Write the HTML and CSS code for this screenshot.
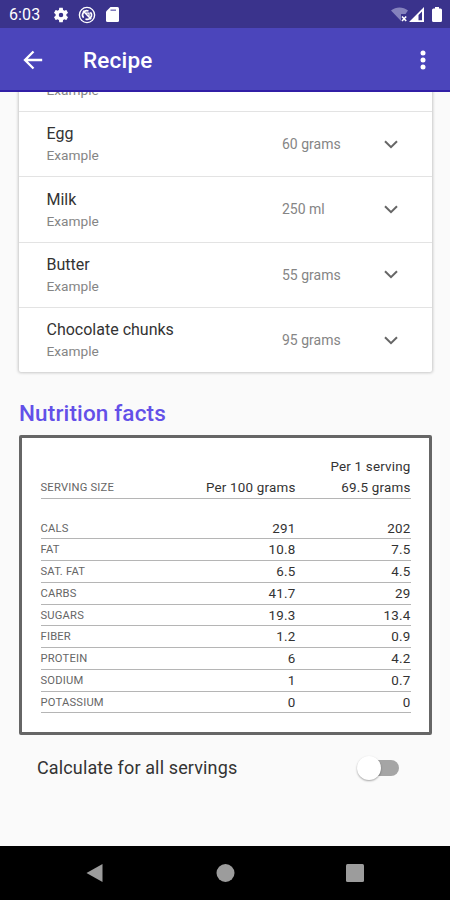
FILE: index.html
```
<!DOCTYPE html>
<html lang="en">
<head>
    <meta charset="UTF-8">
    <meta name="viewport" content="width=device-width, initial-scale=1.0">
    <title>Recipe</title>
    <link rel="stylesheet" href="styles.css">
</head>
<body>
    <div class="status-bar">
        <span class="time">6:03</span>
        <svg class="status-gear" width="18" height="18" viewBox="0 0 24 24"><path fill="#fff" d="M19.14 12.94c.04-.3.06-.61.06-.94 0-.32-.02-.64-.07-.94l2.03-1.58c.18-.14.23-.41.12-.61l-1.92-3.32c-.12-.22-.37-.29-.59-.22l-2.39.96c-.5-.38-1.03-.7-1.62-.94L14.4 2.81c-.04-.24-.24-.41-.48-.41h-3.84c-.24 0-.43.17-.47.41L9.25 5.35C8.66 5.59 8.12 5.92 7.63 6.29L5.24 5.33c-.22-.08-.47 0-.59.22L2.74 8.87c-.12.21-.08.47.12.61l2.03 1.58C4.84 11.36 4.8 11.69 4.8 12s.02.64.07.94l-2.03 1.58c-.18.14-.23.41-.12.61l1.92 3.32c.12.22.37.29.59.22l2.39-.96c.5.38 1.03.7 1.62.94l.36 2.54c.05.24.24.41.48.41h3.84c.24 0 .44-.17.47-.41l.36-2.54c.59-.24 1.13-.56 1.62-.94l2.39.96c.22.08.47 0 .59-.22l1.92-3.32c.12-.22.07-.47-.12-.61l-2.01-1.58zM12 15a3 3 0 1 1 0-6 3 3 0 0 1 0 6z"/></svg>
        <svg class="status-sync" width="18" height="18" viewBox="0 0 18 18" fill="none" stroke="#fff"><circle cx="9" cy="9" r="7.600" stroke-width="1.400"/><path stroke-width="1.600" d="M5.600 11.800A4.300 4.300 0 0 1 10.500 5M12.400 6.200A4.300 4.300 0 0 1 7.500 13M5 4.800l8.200 8.400"/><path stroke-width="1.300" d="M8 7.200h3v3.200"/></svg>
        <svg class="status-sd" width="13" height="15" viewBox="0 0 13 15"><path fill="#fff" d="M4.500 0h7A1.500 1.500 0 0 1 13 1.500v12a1.500 1.500 0 0 1-1.500 1.500h-10A1.500 1.500 0 0 1 0 13.500V4.500z"/><path stroke="#7d79bb" stroke-width="1.500" d="M4.500 3.200h5.500"/></svg>
        <span class="spacer"></span>
        <svg width="34" height="16" viewBox="0 0 34 16"><path fill="#8582bd" d="M0 3.500C5-.6 12-.6 17 3.500L14.500 7H10v7z"/><path stroke="#fff" stroke-width="1.600" d="M11 9.500l4.200 4.500M15.200 9.500L11 14"/><path fill="#fff" fill-rule="evenodd" d="M18 15L33 0v15zM27.500 8v5.200H31V4.500z"/></svg>
        <svg class="status-battery" width="10" height="15" viewBox="0 0 10 15"><path fill="#fff" d="M3 0h4v1.500h1.500A1.500 1.500 0 0 1 10 3v10.500A1.500 1.500 0 0 1 8.500 15h-7A1.500 1.500 0 0 1 0 13.500V3a1.500 1.500 0 0 1 1.500-1.500H3z"/></svg>
    </div>

    <header class="app-bar">
        <svg width="20" height="20" viewBox="0 0 20 20" fill="none" stroke="#fff" stroke-width="2.300"><path d="M19.200 10H2M10.500 1.500L2 10l8.500 8.500"/></svg>
        <h1>Recipe</h1>
        <svg width="8" height="20" viewBox="0 0 8 20" fill="#fff"><circle cx="4" cy="3" r="2.500"/><circle cx="4" cy="10" r="2.500"/><circle cx="4" cy="17" r="2.500"/></svg>
    </header>

    <main>
        <div class="card">
            <div class="row row-cut">
                <div class="item"><span class="source">Example</span></div>
            </div>
            <div class="row">
                <div class="item"><span class="name">Egg</span><span class="source">Example</span></div>
                <span class="amount">60 grams</span>
                <svg class="chevron" width="14" height="9" viewBox="0 0 14 9"><path d="M1 1.200l6 6 6-6"/></svg>
            </div>
            <div class="row">
                <div class="item"><span class="name">Milk</span><span class="source">Example</span></div>
                <span class="amount">250 ml</span>
                <svg class="chevron" width="14" height="9" viewBox="0 0 14 9"><path d="M1 1.200l6 6 6-6"/></svg>
            </div>
            <div class="row">
                <div class="item"><span class="name">Butter</span><span class="source">Example</span></div>
                <span class="amount">55 grams</span>
                <svg class="chevron" width="14" height="9" viewBox="0 0 14 9"><path d="M1 1.200l6 6 6-6"/></svg>
            </div>
            <div class="row">
                <div class="item"><span class="name">Chocolate chunks</span><span class="source">Example</span></div>
                <span class="amount">95 grams</span>
                <svg class="chevron" width="14" height="9" viewBox="0 0 14 9"><path d="M1 1.200l6 6 6-6"/></svg>
            </div>
        </div>

        <h2>Nutrition facts</h2>
        <div class="facts">
            <div class="fact fact-head"><span class="label">Serving size</span><span>Per 100 grams</span><span>Per 1 serving<br>69.5 grams</span></div>
            <div class="fact"><span class="label">Cals</span><span>291</span><span>202</span></div>
            <div class="fact"><span class="label">Fat</span><span>10.8</span><span>7.5</span></div>
            <div class="fact"><span class="label">Sat. fat</span><span>6.5</span><span>4.5</span></div>
            <div class="fact"><span class="label">Carbs</span><span>41.7</span><span>29</span></div>
            <div class="fact"><span class="label">Sugars</span><span>19.3</span><span>13.4</span></div>
            <div class="fact"><span class="label">Fiber</span><span>1.2</span><span>0.9</span></div>
            <div class="fact"><span class="label">Protein</span><span>6</span><span>4.2</span></div>
            <div class="fact"><span class="label">Sodium</span><span>1</span><span>0.7</span></div>
            <div class="fact"><span class="label">Potassium</span><span>0</span><span>0</span></div>
        </div>

        <div class="toggle-row">
            <span>Calculate for all servings</span>
            <div class="switch"><div class="thumb"></div></div>
        </div>
    </main>

    <nav class="nav-bar">
        <svg width="20" height="20" viewBox="0 0 20 20"><path d="M17.500 1v18L1.500 10z"/></svg>
        <svg width="20" height="20" viewBox="0 0 20 20"><circle cx="10.500" cy="10" r="9"/></svg>
        <svg width="20" height="20" viewBox="0 0 20 20"><rect x="1" y="1" width="18" height="18" rx="1.500"/></svg>
    </nav>
</body>
</html>
```
FILE: styles.css
```
* {
    box-sizing: border-box;
}

body {
    margin: 0;
    height: 900px;
    display: flex;
    flex-direction: column;
    font-family: Roboto, sans-serif;
    background: #fafafa;
    overflow: hidden;
}

svg {
    flex: none;
    display: block;
}

.status-bar {
    height: 28px;
    flex: none;
    display: flex;
    align-items: center;
    padding: 1px 8px 0 9px;
    background: #3a338c;
    color: white;
}

.time {
    width: 43px;
    font-size: 16px;
    letter-spacing: 0.1px;
}

.status-sync {
    margin-left: 8px;
}

.status-sd {
    margin-left: 10px;
}

.spacer {
    flex: 1;
}

.status-battery {
    margin-left: 7px;
}

.app-bar {
    height: 64px;
    flex: none;
    display: flex;
    align-items: center;
    padding: 2px 23px 0 23px;
    background: #4b45bb;
    border-bottom: 2px solid #311fa6;
    color: white;
}

h1 {
    flex: 1;
    margin: 0 0 0 40px;
    font-size: 22.5px;
    font-weight: 500;
    letter-spacing: 0.2px;
}

main {
    flex: 1;
    min-height: 0;
    overflow: hidden;
}

.card {
    margin: -45px 18px 0 19px;
    background: white;
    border-radius: 2px;
    box-shadow: 0 0 3px 1px rgba(0, 0, 0, 0.2);
}

.row {
    height: 65.2px;
    display: flex;
    align-items: center;
    padding: 0 34px 0 27.500px;
    border-bottom: 1px solid #e3e3e3;
}

.row:last-child {
    height: 64.6px;
    border-bottom: none;
}

.row-cut {
    align-items: flex-end;
    padding-bottom: 10.5px;
}

.item {
    flex: 1;
    display: flex;
    flex-direction: column;
    padding-top: 1.4px;
}

.name {
    font-size: 16px;
    line-height: 21px;
    color: #333;
}

.source {
    font-size: 13.7px;
    line-height: 22px;
    color: #858585;
}

.amount {
    width: 102px;
    font-size: 14px;
    color: #858585;
}

.chevron {
    fill: none;
    stroke: #666;
    stroke-width: 2;
}

h2 {
    margin: 26.2px 0 8.4px 19px;
    font-size: 22.5px;
    line-height: 28px;
    font-weight: 500;
    letter-spacing: 0.15px;
    color: #6350e8;
}

.facts {
    height: 300px;
    margin: 0 18px 0 19px;
    padding: 18px 18.500px 0;
    background: white;
    border: 3px solid #666;
    border-radius: 2px;
}

.fact {
    height: 21.75px;
    display: grid;
    grid-template-columns: 1fr 115px 115px;
    align-items: end;
    border-bottom: 1px solid #b5b5b5;
    font-size: 13.4px;
    line-height: 21px;
    letter-spacing: 0.2px;
    text-align: right;
    color: #333;
}

.fact-head {
    height: 43px;
    margin-bottom: 18.7px;
}

.label {
    font-size: 11.2px;
    text-align: left;
    text-transform: uppercase;
    color: #666;
}

.toggle-row {
    display: flex;
    align-items: center;
    justify-content: space-between;
    margin: 20px 51px 0 37px;
    height: 26px;
    font-size: 18px;
    letter-spacing: 0.13px;
    color: #333;
}

.switch {
    width: 38px;
    height: 16px;
    display: flex;
    align-items: center;
    border-radius: 8px;
    background: #a5a5a5;
}

.thumb {
    width: 24px;
    height: 24px;
    flex: none;
    margin-left: -4px;
    border-radius: 50%;
    background: white;
    box-shadow: 0 1px 2px rgba(0, 0, 0, 0.35);
}

.nav-bar {
    height: 54px;
    flex: none;
    display: flex;
    align-items: center;
    justify-content: space-between;
    padding: 0 85px;
    background: black;
    fill: #9c9c9c;
}
```
